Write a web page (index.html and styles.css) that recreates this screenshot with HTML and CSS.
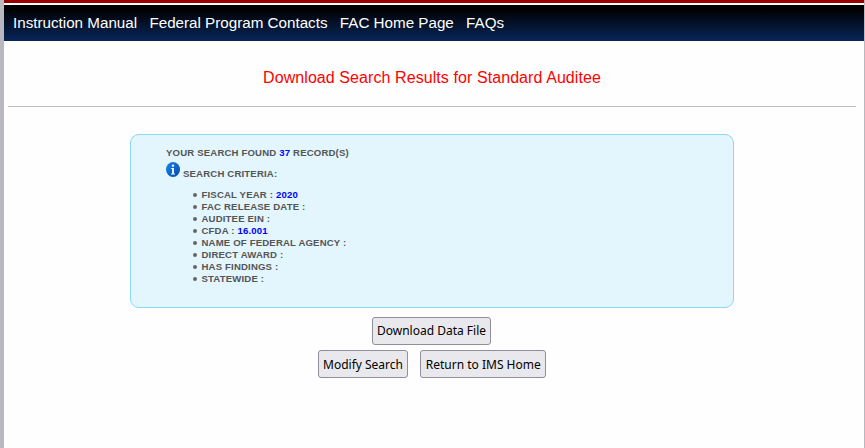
FILE: index.html
```html
<!DOCTYPE html>
<html lang="en">
<head>
<meta charset="utf-8">
<title>Download Search Results</title>
<link rel="stylesheet" href="styles.css">
</head>
<body>
<div class="page">
  <nav class="nav">
    <a>Instruction Manual</a>
    <a>Federal Program Contacts</a>
    <a>FAC Home Page</a>
    <a>FAQs</a>
  </nav>
  <h1 class="title">Download Search Results for Standard Auditee</h1>
  <hr class="rule">
  <section class="results">
    <p class="found">YOUR SEARCH FOUND <b>37</b> RECORD(S)</p>
    <div class="criteria">
      <svg class="info" viewBox="0 0 14 15" width="14" height="15">
        <defs><linearGradient id="blue" x1="0" y1="0" x2="1" y2="1"><stop offset="0" stop-color="#1688f0"/><stop offset="1" stop-color="#0648a6"/></linearGradient></defs>
        <ellipse cx="7" cy="7.5" rx="7" ry="7.5" fill="url(#blue)"/>
        <circle cx="7" cy="3.7" r="1.2" fill="#e9eef2"/>
        <path d="M5 6h3v5.4h1v1.1H5v-1.1h1V7H5z" fill="#e9eef2"/>
      </svg>
      <span>SEARCH CRITERIA:</span>
    </div>
    <ul class="list">
      <li>FISCAL YEAR : <b>2020</b></li>
      <li>FAC RELEASE DATE :</li>
      <li>AUDITEE EIN :</li>
      <li>CFDA : <b>16.001</b></li>
      <li>NAME OF FEDERAL AGENCY :</li>
      <li>DIRECT AWARD :</li>
      <li>HAS FINDINGS :</li>
      <li>STATEWIDE :</li>
    </ul>
  </section>
  <div class="actions">
    <button class="download">Download Data File</button>
  </div>
  <div class="actions second">
    <button class="modify">Modify Search</button>
    <button class="home">Return to IMS Home</button>
  </div>
</div>
</body>
</html>
```
FILE: styles.css
```css
* { box-sizing: border-box; }
body {
  margin: 0;
  background: #b8b8be;
  font-family: "Liberation Sans", Arial, sans-serif;
}
.page {
  height: 448px;
  margin: 0 1px 0 4px;
  background: #fefefe;
  border-top: 3px solid #990000;
  overflow: hidden;
}
.nav {
  display: flex;
  gap: 12.3px;
  height: 36px;
  margin-top: 2px;
  padding-left: 9px;
  background: linear-gradient(#000 10%, #08265a);
  color: #fff;
  font-size: 15.2px;
  line-height: 35px;
  white-space: nowrap;
}
.title {
  margin: 28px 0 0;
  padding-right: 4px;
  color: #f00;
  font-size: 16px;
  font-weight: normal;
  letter-spacing: 0.08px;
  line-height: 18px;
  text-align: center;
}
.rule {
  height: 1px;
  margin: 19px 8px 0 4px;
  border: 0;
  background: #bdbdbd;
}
.results {
  width: 604px;
  height: 174px;
  margin: 27px 0 0 126px;
  padding: 12px 35px 0;
  border: 1px solid #8ad8f3;
  border-radius: 9px;
  background: #e3f6fd;
  color: #555;
  font-size: 9.6px;
  font-weight: bold;
  letter-spacing: 0.16px;
  line-height: 12px;
}
.results b { color: #00f; }
.found { margin: 0; }
.criteria {
  display: flex;
  gap: 3px;
  height: 18px;
  margin-top: 3px;
}
.criteria span { padding-top: 6px; }
.info { display: block; }
.list {
  margin: 9px 0 0;
  padding: 0;
  list-style: none;
}
.list li {
  display: flex;
  align-items: center;
  white-space: pre;
  padding-left: 27px;
}
.list li::before {
  content: "";
  width: 4px;
  height: 4px;
  margin: 0 4.5px 0 0;
  border-radius: 50%;
  background: #666;
}
.actions {
  display: flex;
  justify-content: center;
  gap: 12px;
  margin-top: 9px;
  padding-right: 5px;
}
.second { margin-top: 5px; padding-right: 4px; }
button {
  height: 28px;
  padding: 0;
  border: 1px solid #8f8f9d;
  border-radius: 3px;
  background: #e9e9ed;
  color: #000;
  font: 12px/26px "Noto Sans", sans-serif;
  white-space: nowrap;
}
.download { width: 119px; }
.modify, .home { padding-top: 2px; line-height: 24px; }
.modify { width: 90px; }
.home { width: 126px; padding-left: 0.5px; }
```
